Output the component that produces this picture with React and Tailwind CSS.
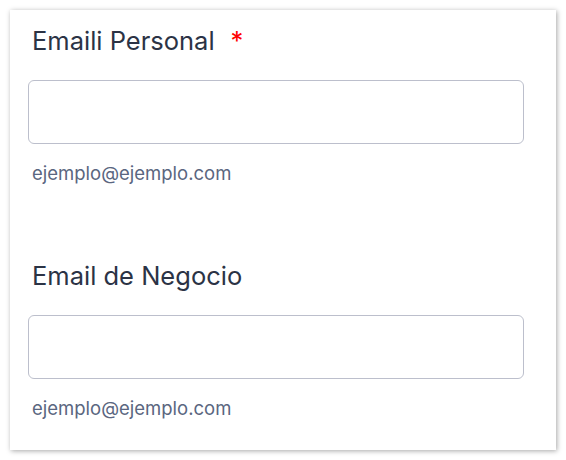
export default function App() {
  const Field = ({ label, required }) => (
    <div className="flex flex-col">
      <div className="ml-[4px] flex items-center text-[25.5px] leading-[30px] text-[#2b3345]">
        <span>{label}</span>
        {required && <span className="ml-[16px] text-[#ff0000]">*</span>}
      </div>
      <div className="mt-[24px] h-[64px] w-[496px] rounded-[6px] border border-[#bcbfcc] bg-white" />
      <div className="ml-[4px] mt-[17px] text-[18.5px] leading-[24px] text-[#5a6680]">ejemplo@ejemplo.com</div>
    </div>
  );
  return (
    <div className="h-[460px] w-[566px] bg-white p-[10px]" style={{ fontFamily: "Inter, sans-serif" }}>
      <div className="h-[440px] w-[546px] bg-white pl-[18px] pt-[16px] shadow-[1px_1px_5px_rgba(0,0,0,0.35)]">
        <Field label="Emaili Personal" required />
        <div className="h-[76px]" />
        <Field label="Email de Negocio" />
      </div>
    </div>
  );
}
